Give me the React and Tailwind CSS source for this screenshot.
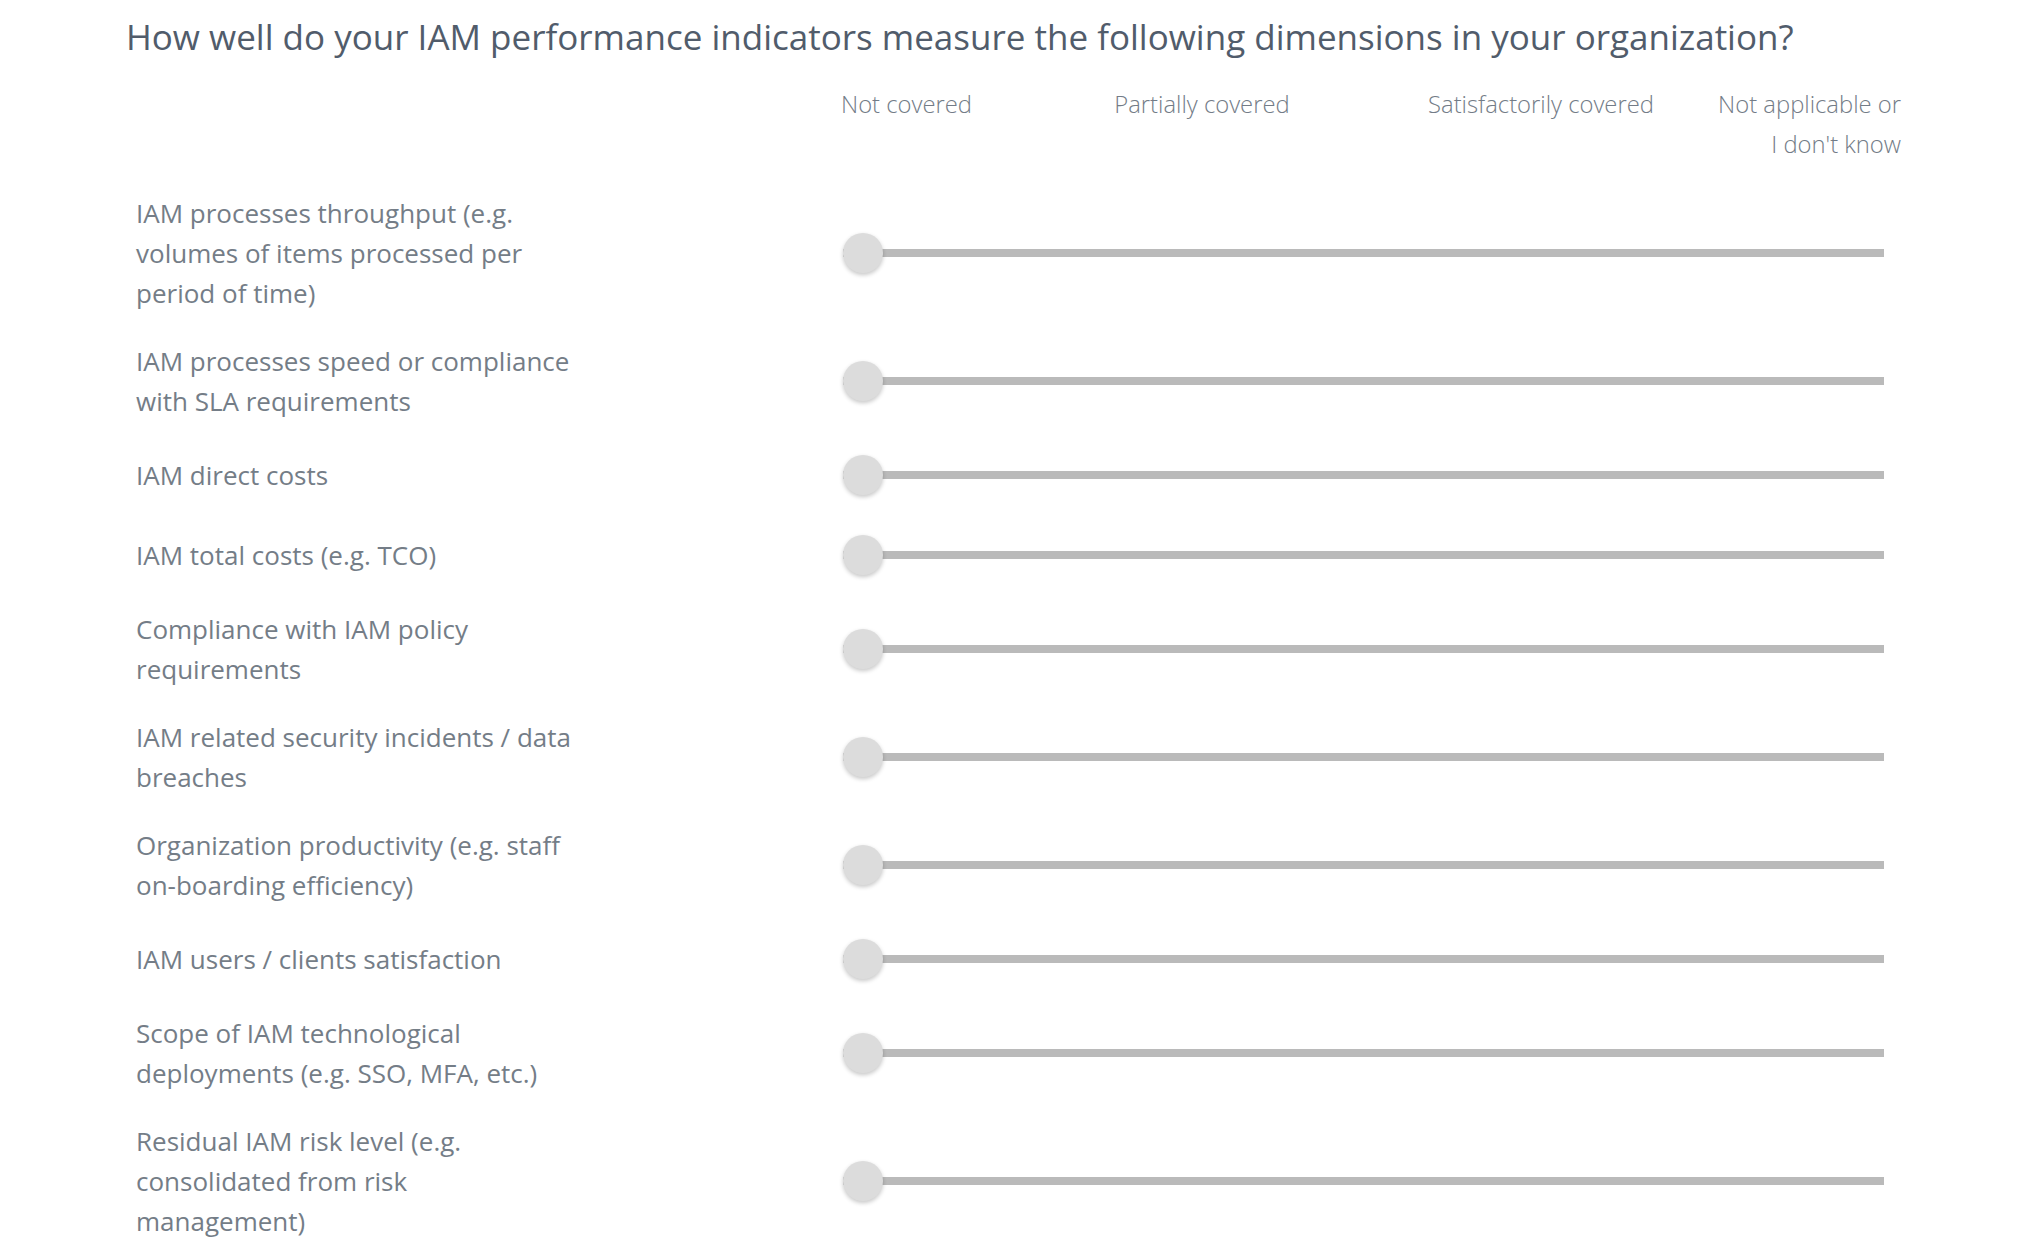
// Survey grid: IAM performance indicators, one slider per dimension
const dimensions = [
  ["IAM processes throughput (e.g.", "volumes of items processed per", "period of time)"],
  ["IAM processes speed or compliance", "with SLA requirements"],
  ["IAM direct costs"],
  ["IAM total costs (e.g. TCO)"],
  ["Compliance with IAM policy", "requirements"],
  ["IAM related security incidents / data", "breaches"],
  ["Organization productivity (e.g. staff", "on-boarding efficiency)"],
  ["IAM users / clients satisfaction"],
  ["Scope of IAM technological", "deployments (e.g. SSO, MFA, etc.)"],
  ["Residual IAM risk level (e.g.", "consolidated from risk", "management)"],
];

function Slider() {
  return (
    <div className="relative w-[1041px] h-[52px] flex items-center">
      <div className="w-full h-[8px] bg-[#bababa]" />
      <div className="absolute left-0 top-1/2 -translate-y-1/2 w-[40px] h-[40px] rounded-full bg-[#dcdcdc] shadow-[0_2px_4px_rgba(0,0,0,0.22)]" />
    </div>
  );
}

export default function App() {
  return (
    <div className="min-h-screen bg-white pb-10" style={{ fontFamily: '"Open Sans", "Noto Sans", sans-serif' }}>
      <h1 className="pl-[126px] pt-[13px] text-[35px] leading-[48px] font-normal text-[#515c6b] whitespace-nowrap">
        How well do your IAM performance indicators measure the following dimensions in your organization?
      </h1>

      {/* cabecera de la escala */}
      <div className="mt-[23px] ml-[841px] grid grid-cols-[189px_344px_334px_193px] text-[23.8px] leading-[40px] font-light text-[#737c87]">
        <div className="text-left whitespace-nowrap">Not covered</div>
        <div className="text-center whitespace-nowrap">Partially covered</div>
        <div className="text-center whitespace-nowrap">Satisfactorily covered</div>
        <div className="text-right whitespace-nowrap">
          Not applicable or
          <br />
          I don't know
        </div>
      </div>

      <div className="mt-[15px] flex flex-col">
        {dimensions.map((lines, i) => (
          <div key={i} className="flex items-center py-[14px] min-h-[80px]">
            <div className="ml-[136px] w-[707px] text-[26px] leading-[40px] font-normal text-[#747d87]">
              {lines.map((l, j) => (
                <div key={j} className="whitespace-nowrap">{l}</div>
              ))}
            </div>
            <Slider />
          </div>
        ))}
      </div>
    </div>
  );
}
